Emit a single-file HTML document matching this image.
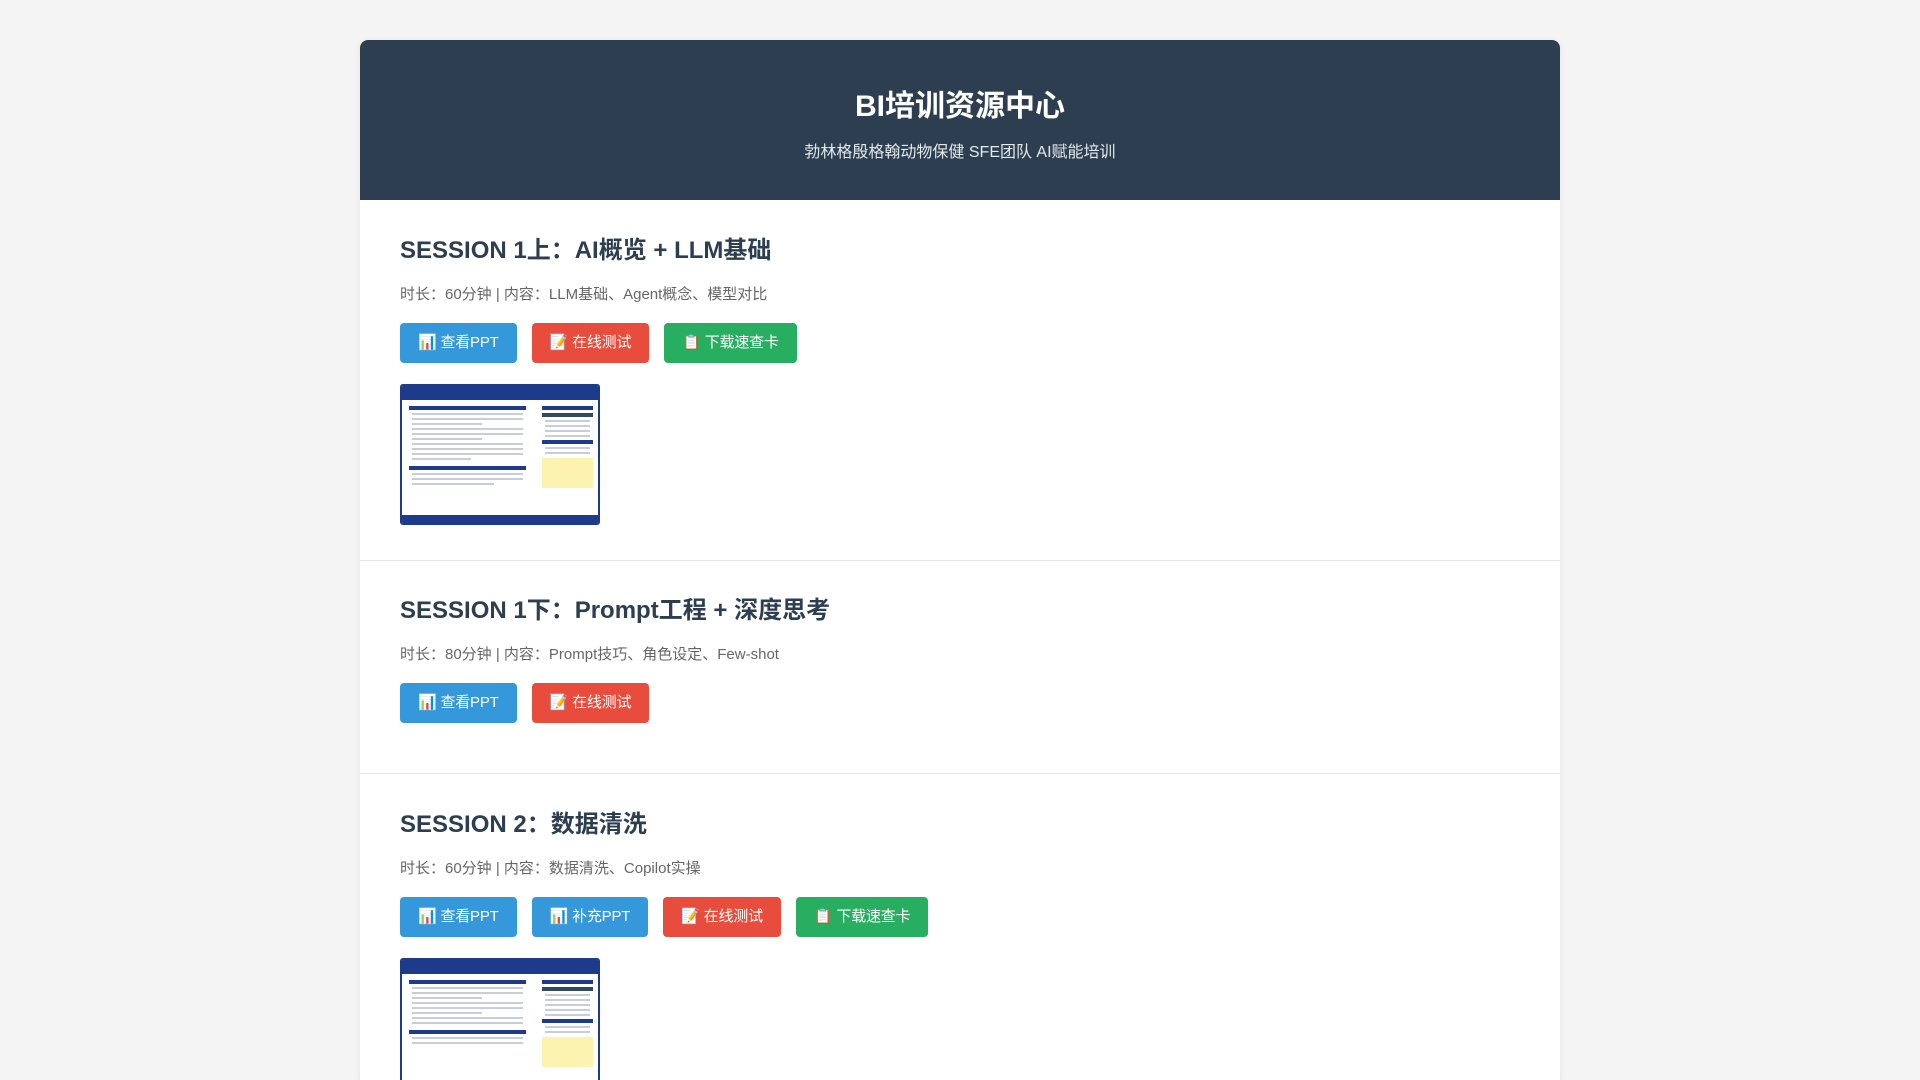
<!DOCTYPE html>
<html><head><meta charset="utf-8"><style>
*{box-sizing:border-box;margin:0;padding:0}
html,body{height:1080px;overflow:hidden}
body{background:#f4f4f4;font-family:"Liberation Sans","Noto Sans CJK SC",sans-serif;width:1920px}
.wrap{position:absolute;left:360px;top:40px;width:1200px;background:#fff;border-radius:8px 8px 0 0;box-shadow:0 2px 8px rgba(0,0,0,.08);overflow:hidden;height:1040px}
.hd{background:#2c3e50;height:160px;text-align:center;color:#fff}
.hd h1{font-size:30px;font-weight:bold;padding-top:48px;line-height:38px}
.hd p{font-size:16px;color:#e3e8ec;margin-top:12px}
.sec{padding:0 40px;border-bottom:1px solid #e5e5e5;position:relative}
h2{font-size:24px;color:#2c3e50;font-weight:bold;line-height:30px}
.meta{font-size:15px;color:#666;line-height:20px;margin-top:19px}
.btns{display:flex;gap:15px;margin-top:18px}
.b{height:40px;line-height:40px;padding:0 18px;color:#fff;border-radius:4px;font-size:15px;white-space:nowrap;letter-spacing:-0.2px}
.bl{background:#3498db}.rd{background:#e74c3c}.gr{background:#27ae60}
.th{width:200px;height:141px;border:2px solid #1e3a8a;border-radius:3px;background:#fff;position:relative;overflow:hidden}
.th .t{height:14px;background:#1e3a8a}
.th .f{position:absolute;left:0;right:0;bottom:0;height:8px;background:#1e3a8a}
.th .l{position:absolute;left:7px;width:117px;top:20px}
.th .r{position:absolute;left:140px;width:51px;top:20px}
.bar{height:4px;background:#1e3a8a;margin-bottom:3px}
.ln{height:2px;background:#c8cdd8;margin:3px 3px}
.y{background:#fdf3b0;height:30px;margin-top:4px}
</style></head><body>
<div class="wrap">
<div class="hd"><h1>BI培训资源中心</h1><p>勃林格殷格翰动物保健 SFE团队 AI赋能培训</p></div>

<div class="sec" style="height:361px;padding-top:36px">
<h2>SESSION 1上：AI概览 + LLM基础</h2>
<div class="meta">时长：60分钟 | 内容：LLM基础、Agent概念、模型对比</div>
<div class="btns"><div class="b bl">📊 查看PPT</div><div class="b rd">📝 在线测试</div><div class="b gr">📋 下载速查卡</div></div>
<div class="th" style="margin-top:21px"><div class="t"></div>
<div class="l"><div class="bar"></div><div class="ln"></div><div class="ln"></div><div class="ln" style="width:60%"></div><div class="ln"></div><div class="ln"></div><div class="ln" style="width:60%"></div><div class="ln"></div><div class="ln"></div><div class="ln"></div><div class="ln" style="width:50%"></div><div class="bar" style="margin-top:6px"></div><div class="ln"></div><div class="ln"></div><div class="ln" style="width:70%"></div></div>
<div class="r"><div class="bar"></div><div class="bar" style="background:#34495e"></div><div class="ln"></div><div class="ln"></div><div class="ln"></div><div class="ln"></div><div class="bar"></div><div class="ln"></div><div class="ln"></div><div class="y"></div></div>
<div class="f"></div></div>
</div>

<div class="sec" style="height:213px;padding-top:35px">
<h2>SESSION 1下：Prompt工程 + 深度思考</h2>
<div class="meta">时长：80分钟 | 内容：Prompt技巧、角色设定、Few-shot</div>
<div class="btns"><div class="b bl">📊 查看PPT</div><div class="b rd">📝 在线测试</div></div>
</div>

<div class="sec" style="height:400px;padding-top:36px;border:none">
<h2>SESSION 2：数据清洗</h2>
<div class="meta">时长：60分钟 | 内容：数据清洗、Copilot实操</div>
<div class="btns"><div class="b bl">📊 查看PPT</div><div class="b bl">📊 补充PPT</div><div class="b rd">📝 在线测试</div><div class="b gr">📋 下载速查卡</div></div>
<div class="th" style="margin-top:21px"><div class="t"></div>
<div class="l"><div class="bar"></div><div class="ln"></div><div class="ln"></div><div class="ln" style="width:60%"></div><div class="ln"></div><div class="ln"></div><div class="ln" style="width:60%"></div><div class="ln"></div><div class="ln"></div><div class="bar" style="margin-top:6px"></div><div class="ln"></div><div class="ln"></div></div>
<div class="r"><div class="bar"></div><div class="bar" style="background:#34495e"></div><div class="ln"></div><div class="ln"></div><div class="ln"></div><div class="ln"></div><div class="ln"></div><div class="bar"></div><div class="ln"></div><div class="ln"></div><div class="y"></div></div>
</div>
</div>
</div>
</body></html>
